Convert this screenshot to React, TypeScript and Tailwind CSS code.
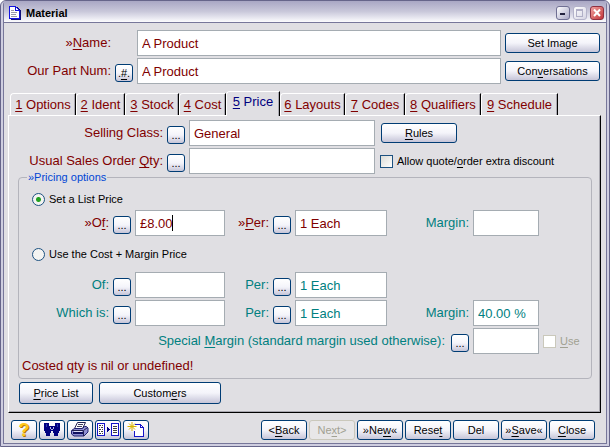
import { useState } from "react";
import type { ReactNode } from "react";

const SMALL_TEXT_CLS = "text-[11px] leading-4";
const BUTTON_CLS =
  "flex items-center justify-center whitespace-nowrap rounded-[3px] border border-[#003c74] bg-linear-to-b from-white via-[#f4f4fa] to-[#c6c5d8] text-[11px] leading-4 text-black disabled:border-[#cac8bb] disabled:from-[#e8e7e8] disabled:via-[#e8e7e8] disabled:to-[#e8e7e8] disabled:text-[#a1a192]";
const INPUT_CLS =
  "h-[26px] min-w-0 rounded-none border border-[#a5acb2] bg-white px-1 text-[13px] leading-4 outline-none";
const RED = "text-[#800000]";
const TEAL = "text-[#008080]";

// "&" marks the access key, which is drawn underlined
function Mnemonic({ text }: { text: string }) {
  const at = text.indexOf("&");
  if (at < 0) return <>{text}</>;
  return (
    <span>
      {text.slice(0, at)}
      <span className="underline underline-offset-2">{text[at + 1]}</span>
      {text.slice(at + 2)}
    </span>
  );
}

function PickButton({ label = "...", title }: { label?: string; title: string }) {
  return (
    <button type="button" aria-label={title} className={`${BUTTON_CLS} mt-1 size-[18px] shrink-0`}>
      <Mnemonic text={label} />
    </button>
  );
}

function FieldLabel({
  htmlFor,
  text,
  className,
}: {
  htmlFor: string;
  text: string;
  className: string;
}) {
  return (
    <label htmlFor={htmlFor} className={`whitespace-nowrap text-right ${className}`}>
      <Mnemonic text={text} />
    </label>
  );
}

function PriceRow({
  id,
  label,
  perLabel,
  amount = "",
  tone,
  caret = false,
  margin,
}: {
  id: string;
  label: string;
  perLabel: string;
  amount?: string;
  tone: string;
  caret?: boolean;
  margin?: string;
}) {
  return (
    <div className="flex items-center gap-1">
      <FieldLabel htmlFor={`${id}-amount`} text={label} className={`w-[90px] ${tone}`} />
      <PickButton title="Choose amount" />
      <div className="relative flex w-[90px]">
        <input id={`${id}-amount`} defaultValue={amount} className={`${INPUT_CLS} w-full ${tone}`} />
        {caret && <span className="absolute left-[37px] top-[5px] h-4 w-px bg-black" />}
      </div>
      <FieldLabel htmlFor={`${id}-per`} text={perLabel} className={`w-10 ${tone}`} />
      <PickButton title="Choose unit" />
      <input id={`${id}-per`} defaultValue="1 Each" className={`${INPUT_CLS} w-[92px] ${tone}`} />
      {margin !== undefined && (
        <>
          <FieldLabel htmlFor={`${id}-margin`} text="Margin:" className={`flex-1 ${TEAL}`} />
          <input
            id={`${id}-margin`}
            defaultValue={margin}
            className={`${INPUT_CLS} mr-[52px] w-[66px] ${TEAL}`}
          />
        </>
      )}
    </div>
  );
}

const RADIO_CLS =
  "size-[13px] shrink-0 appearance-none rounded-full border border-[#1c5180] bg-[#f4f4f2] checked:bg-[radial-gradient(circle,#21a121_0,#21a121_2px,#f4f4f2_3px)]";
const CHECK_CLS =
  "size-[13px] shrink-0 appearance-none border border-[#1c5180] bg-linear-to-br from-[#dcdcd7] to-white disabled:border-[#cac8bb] disabled:from-white";

const TABS = [
  { label: "&1 Options", width: "w-[66px]" },
  { label: "&2 Ident", width: "w-[49px]" },
  { label: "&3 Stock", width: "w-[54px]" },
  { label: "&4 Cost", width: "w-[47px]" },
  { label: "&5 Price", width: "w-[54px]" },
  { label: "&6 Layouts", width: "w-[65px]" },
  { label: "&7 Codes", width: "w-[60px]" },
  { label: "&8 Qualifiers", width: "w-[76px]" },
  { label: "&9 Schedule", width: "w-[77px]" },
];

function TitleBar() {
  return (
    <header className="flex h-[22px] items-center gap-[3px] border-b border-[#77779a] bg-linear-to-b from-[#a9a7c4] via-[#c9c8da] to-[#fcfcfe] pl-[5px] pr-0.5 pt-[3px]">
      <svg width="12" height="14" viewBox="0 0 12 14" shapeRendering="crispEdges">
        <path d="M2 1h6l4 4v9H2z" fill="#10107a" />
        <path d="M.5.5h6l4 4v8h-10z" fill="#fff" stroke="#1414e0" />
        <path d="M6.5.5v4h4" fill="none" stroke="#1414e0" />
        <path d="M2 4.5h3M2 6.5h6M2 8.5h5M2 10.5h6" stroke="#9a9aa8" />
      </svg>
      <h1 className="flex-1 pl-0.5 text-[11px] font-bold leading-4 text-black">Material</h1>
      <button
        type="button"
        aria-label="Minimise"
        className="size-[14px] rounded-[3px] border border-[#6f6f93] bg-linear-to-br from-white to-[#a9a8c6]"
      >
        <svg width="12" height="12" shapeRendering="crispEdges">
          <path d="M3 6h5v2H3z" fill="#23233f" />
        </svg>
      </button>
      <button
        type="button"
        aria-label="Maximise"
        disabled
        className="size-[14px] rounded-[3px] border border-[#b4b3ca] bg-linear-to-br from-white to-[#d6d5e4]"
      >
        <svg width="12" height="12" shapeRendering="crispEdges">
          <path d="M2.5 3.5h6v6h-6zM2 2.5h7" fill="none" stroke="#b0afc6" />
        </svg>
      </button>
      <button
        type="button"
        aria-label="Close window"
        className="size-[14px] rounded-[3px] border border-[#8f3040] bg-linear-to-br from-[#f0a0a0] to-[#c02e38]"
      >
        <svg width="12" height="12">
          <path d="M3 2.5l6 6.5M9 2.5L3 9" stroke="#fff" strokeWidth="2" />
        </svg>
      </button>
    </header>
  );
}

function BinocularsIcon() {
  return (
    <svg width="20" height="16" viewBox="0 0 20 16" shapeRendering="crispEdges">
      <path
        d="M2 1h5v3h6V1h5v8h-1v2h-1v3h-4v-3h-1V9H9v2H8v3H4v-3H3V9H2z"
        fill="#000080"
      />
      <path d="M8 5h1v2H8zM11 5h1v2h-1zM9 7h2v1H9z" fill="#b4b8e4" />
      <path d="M4 2h1v3H4zM15 2h1v3h-1z" fill="#2838b0" />
    </svg>
  );
}

function PrinterIcon() {
  return (
    <svg width="20" height="16" viewBox="0 0 20 16">
      <path d="M7.5.5h8l-3 6h-8z" fill="#fff" stroke="#202050" />
      <path d="M8 2.5h5M7 4.5h5" stroke="#404060" />
      <path d="M1.5 8.5l3-2h8l2-2h2l1.500 1.500v4l-4 4h-10l-2.500-2z" fill="#8e8ed0" stroke="#202070" />
      <path d="M2 8.500h11.500l4-3" fill="none" stroke="#202050" />
      <path d="M3 11h10" stroke="#101060" strokeWidth="2" />
      <path d="M13.500 9v5" stroke="#202050" />
      <path d="M4 9.500h8" stroke="#dcdcf4" />
    </svg>
  );
}

function TransferIcon() {
  return (
    <svg width="24" height="16" viewBox="0 0 24 16" shapeRendering="crispEdges">
      <path d="M1.5 1.5h7v12h-7zM15.5 1.5h7v12h-7z" fill="#fff" stroke="#1414c8" />
      <path
        d="M3 3.5h2M6 3.5h1M3 5.5h1M5 5.5h2M3 7.5h2M6 7.5h1M3 9.5h1M5 9.5h2M3 11.5h2M6 11.5h1M17 4.5h4M17 6.5h4M17 8.5h4M17 10.5h4"
        stroke="#404040"
      />
      <path d="M11 5v5h1V9h1V8h1V7h-1V6h-1V5z" fill="#000080" />
    </svg>
  );
}

function NewIcon() {
  return (
    <svg width="20" height="16" viewBox="0 0 20 16">
      <path d="M8 3h7l2 2v10H8z" fill="#fff" />
      <path
        d="M9 2.5h5.5v3h3M14.5 2.5l3 3v9h-9V9"
        fill="none"
        stroke="#1414c8"
        shapeRendering="crispEdges"
      />
      <path d="M6 0v9M1.5 4.5h9M3 1.5l6 6M9 1.5l-6 6" stroke="#d8b400" />
    </svg>
  );
}

function ToolButton({ title, children }: { title: string; children: ReactNode }) {
  return (
    <button type="button" aria-label={title} className={`${BUTTON_CLS} h-5 w-[26px]`}>
      {children}
    </button>
  );
}

const ACTIONS = [
  { label: "<&Back" },
  { label: "Ne&xt>", disabled: true },
  { label: "»Ne&w«" },
  { label: "Rese&t" },
  { label: "Del" },
  { label: "»&Save«" },
  { label: "&Close" },
];

export default function App() {
  const [active, setActive] = useState(4);

  return (
    <div className="flex min-h-screen flex-col rounded-t-md border border-[#66658a] bg-[#cfcee0] px-0.5 pb-0.5 font-['Liberation_Sans',sans-serif] text-[13px] leading-4">
      <div className="flex flex-1 flex-col rounded-t border border-t-0 border-[#77779a] bg-[#e0dfe3]">
        <TitleBar />

        <div className="flex flex-col gap-0.5 pr-1.5 pt-[7px]">
          <div className="flex items-center gap-1">
            <FieldLabel htmlFor="name" text="»&Name:" className={`mr-[22px] w-[107px] ${RED}`} />
            <input id="name" defaultValue="A Product" className={`${INPUT_CLS} flex-1 ${RED}`} />
            <button type="button" className={`${BUTTON_CLS} h-5 w-[95px]`}>
              Set Image
            </button>
          </div>
          <div className="flex items-center gap-1">
            <FieldLabel htmlFor="part" text="Our Part Num:" className={`w-[107px] ${RED}`} />
            <PickButton title="Next part number" label=".&#." />
            <input id="part" defaultValue="A Product" className={`${INPUT_CLS} flex-1 ${RED}`} />
            <button type="button" className={`${BUTTON_CLS} h-5 w-[95px]`}>
              <Mnemonic text="Con&versations" />
            </button>
          </div>
        </div>

        <div role="tablist" className="relative mt-[7px] flex items-end pl-1.5">
          {TABS.map((tab, index) => (
            <button
              key={tab.label}
              type="button"
              role="tab"
              aria-selected={index === active}
              onClick={() => setActive(index)}
              className={`${tab.width} whitespace-nowrap rounded-tl-sm border-l border-r border-t border-l-white border-r-black border-t-white bg-[#e0dfe3] text-center shadow-[inset_-1px_0_0_#a9a8b0] ${
                index === active ? "-mb-px h-[25px] pb-1 text-[#000080]" : `h-[22px] ${RED}`
              }`}
            >
              <Mnemonic text={tab.label} />
            </button>
          ))}
        </div>

        <main className="ml-1 mr-[5px] flex-1 border border-b-black border-l-white border-r-black border-t-white pb-2 shadow-[inset_-1px_-1px_0_#a9a8b0]">
          <div className="flex flex-col gap-0.5 pr-2 pt-1">
            <div className="flex items-center gap-1">
              <FieldLabel htmlFor="class" text="Selling Class:" className={`w-[154px] ${RED}`} />
              <PickButton title="Choose class" />
              <input id="class" defaultValue="General" className={`${INPUT_CLS} flex-1 ${RED}`} />
              <div className="w-[213px] pl-0.5">
                <button type="button" className={`${BUTTON_CLS} h-5 w-[76px]`}>
                  <Mnemonic text="&Rules" />
                </button>
              </div>
            </div>
            <div className="flex items-center gap-1">
              <FieldLabel htmlFor="qty" text="Usual Sales Order &Qty:" className={`w-[154px] ${RED}`} />
              <PickButton title="Choose quantity" />
              <input id="qty" className={`${INPUT_CLS} flex-1 ${RED}`} />
              <label
                className={`flex w-[213px] items-center gap-1 whitespace-nowrap pl-px ${SMALL_TEXT_CLS}`}
              >
                <input type="checkbox" className={CHECK_CLS} />
                <Mnemonic text="Allow quote/&order extra discount" />
              </label>
            </div>
          </div>

          <fieldset className="-mt-[3px] ml-[9px] mr-2 rounded-[4px] border border-[#b4b4bc]">
            <legend className="ml-2 px-px text-[11px] leading-3 text-[#0046d5]">
              »Pricing options
            </legend>
            <label className={`mt-[7px] flex h-[18px] items-center gap-1 pl-[13px] ${SMALL_TEXT_CLS}`}>
              <input type="radio" name="pricing" defaultChecked className={RADIO_CLS} />
              Set a List Price
            </label>
            <div className="mt-0.5">
              <PriceRow id="list" label="»O&f:" perLabel="»&Per:" amount="£8.00" tone={RED} caret margin="" />
            </div>
            <label className={`my-[9px] flex h-[18px] items-center gap-1 pl-[13px] ${SMALL_TEXT_CLS}`}>
              <input type="radio" name="pricing" className={RADIO_CLS} />
              Use the Cost + Margin Price
            </label>
            <div className="flex flex-col gap-0.5">
              <PriceRow id="cost" label="Of:" perLabel="Per:" tone={TEAL} />
              <PriceRow id="which" label="Which is:" perLabel="Per:" tone={TEAL} margin="40.00 %" />
              <div className="flex items-center gap-1">
                <FieldLabel
                  htmlFor="special"
                  text="Special &Margin (standard margin used otherwise):"
                  className={`flex-1 pr-0.5 ${TEAL}`}
                />
                <PickButton title="Choose margin" />
                <input id="special" className={`${INPUT_CLS} w-[66px] ${TEAL}`} />
                <label className={`flex w-12 items-center gap-1 text-[#a1a192] ${SMALL_TEXT_CLS}`}>
                  <input type="checkbox" disabled className={CHECK_CLS} />
                  <Mnemonic text="&Use" />
                </label>
              </div>
            </div>
            <p className={`mb-0.5 mt-1 h-[18px] pl-[3px] ${RED}`}>Costed qty is nil or undefined!</p>
          </fieldset>

          <div className="mt-[3px] flex gap-1.5 pl-2.5">
            <button type="button" className={`${BUTTON_CLS} h-[22px] w-[74px]`}>
              <Mnemonic text="&Price List" />
            </button>
            <button type="button" className={`${BUTTON_CLS} h-[22px] w-[122px]`}>
              <Mnemonic text="Custom&ers" />
            </button>
          </div>
        </main>

        <footer className="flex justify-between pb-[3px] pl-[7px] pr-[11px] pt-[7px]">
          <div className="flex gap-0.5">
            <ToolButton title="Help">
              <span className="text-[18px] font-bold leading-4 text-[#ffc81e] [text-shadow:1px_1px_0_#b07800]">
                ?
              </span>
            </ToolButton>
            <ToolButton title="Find">
              <BinocularsIcon />
            </ToolButton>
            <ToolButton title="Print">
              <PrinterIcon />
            </ToolButton>
            <ToolButton title="Transfer">
              <TransferIcon />
            </ToolButton>
            <ToolButton title="New item">
              <NewIcon />
            </ToolButton>
          </div>
          <div className="flex gap-0.5">
            {ACTIONS.map((action) => (
              <button
                key={action.label}
                type="button"
                disabled={action.disabled}
                className={`${BUTTON_CLS} h-5 w-[46px]`}
              >
                <Mnemonic text={action.label} />
              </button>
            ))}
          </div>
        </footer>
      </div>
    </div>
  );
}
